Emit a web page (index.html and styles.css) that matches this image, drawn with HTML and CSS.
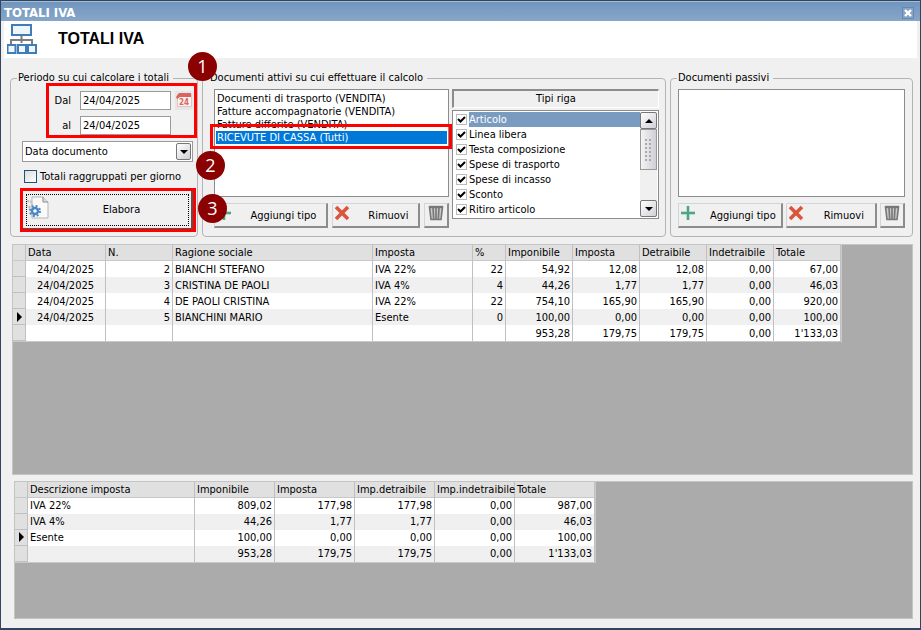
FILE: index.html
```html
<!DOCTYPE html>
<html lang="it">
<head>
    <meta charset="UTF-8">
    <meta name="viewport" content="width=device-width, initial-scale=1.0">
    <title>TOTALI IVA</title>
    <link rel="stylesheet" href="styles.css">
</head>
<body>

    <!-- shared icons -->
    <svg class="icon-defs" width="0" height="0" aria-hidden="true">
        <symbol id="icon-plus" viewBox="0 0 16 16">
            <path d="M8 1v14M1 8h14" fill="none" stroke="#8cc7ac" stroke-width="3"/>
            <path d="M8 1v14M1 8h14" fill="none" stroke="#4fa583" stroke-width="2"/>
        </symbol>
        <symbol id="icon-cross" viewBox="0 0 16 16">
            <path d="M2 2c3 3 8 8 12 12M14 2C11 5 6 10 2 14" fill="none" stroke="#d9563c" stroke-width="3.6"/>
        </symbol>
        <symbol id="icon-trash" viewBox="0 0 16 16">
            <path d="M1.5 2h13l-1.5 12.500h-10z" fill="#c9c9c9" stroke="#777" stroke-width="1.600"/>
            <path d="M1 2h14" stroke="#777" stroke-width="2.400"/>
            <path d="M5 3l.7 11M8 3v11M11 3l-.7 11" stroke="#777" stroke-width="1.600"/>
        </symbol>
    </svg>

    <div class="window">
        <div class="titlebar">
            <span>TOTALI IVA</span>
            <button class="close-btn" aria-label="Chiudi">
                <svg viewBox="0 0 8 8" width="8" height="8"><path d="M1 1l6 6M7 1L1 7" stroke="#fff" stroke-width="2.400"/></svg>
            </button>
        </div>

        <div class="header">
            <svg class="header-icon" viewBox="0 0 32 32" width="32" height="32">
                <path d="M14.500 13v7M4 21v-4h21v4" fill="none" stroke="#7d7d7d" stroke-width="2"/>
                <g fill="#eef6fc" stroke="#3f7cb8" stroke-width="2">
                    <rect x="5" y="2" width="19" height="10"/>
                    <rect x="0.500" y="22" width="8" height="8"/>
                    <rect x="11" y="22" width="8" height="8"/>
                    <rect x="21" y="22" width="8" height="8"/>
                </g>
            </svg>
            <h1>TOTALI IVA</h1>
        </div>

        <div class="content">
            <div class="groups">
                <fieldset class="group group-period">
                    <legend>Periodo su cui calcolare i totali</legend>
                    <div class="date-row">
                        <label for="dal">Dal</label>
                        <input type="text" id="dal" value="24/04/2025">
                        <button class="calendar-btn" aria-label="Calendario">
                            <svg viewBox="0 0 18 18" width="18" height="18">
                                <path d="M2.500 3.500h14v12h-14z" fill="#fbf3f2" stroke="#dcc6c4"/>
                                <path d="M1 6l3-4h12v4H5l-3 2z" fill="#d9665c"/>
                                <text x="9" y="14" text-anchor="middle" class="calendar-day">24</text>
                            </svg>
                        </button>
                    </div>
                    <div class="date-row">
                        <label for="al">al</label>
                        <input type="text" id="al" value="24/04/2025">
                    </div>
                    <div class="combo">
                        <select aria-label="Tipo data">
                            <option>Data documento</option>
                        </select>
                        <span class="combo-arrow"></span>
                    </div>
                    <label class="daily"><input type="checkbox">Totali raggruppati per giorno</label>
                    <button class="run-btn">
                        <svg viewBox="0 0 24 24" width="24" height="24">
                            <path d="M6 1h11l5 5v16H6z" fill="#fafafa" stroke="#b5b5b5"/>
                            <path d="M17 1v5h5" fill="#ddd" stroke="#8d8d8d"/>
                            <circle cx="3" cy="8" r="3" fill="none" stroke="#bdbdbd" stroke-width="2" stroke-dasharray="2 1"/>
                            <circle cx="9" cy="15" r="5" fill="none" stroke="#4a86c0" stroke-width="2" stroke-dasharray="2 1.930"/>
                            <circle cx="9" cy="15" r="3" fill="#fff" stroke="#4a86c0" stroke-width="2.400"/>
                        </svg>
                        <span>Elabora</span>
                    </button>
                    <span class="mark mark-dates"></span>
                    <span class="mark mark-run"></span>
                </fieldset>

                <fieldset class="group group-active">
                    <legend>Documenti attivi su cui effettuare il calcolo</legend>
                    <div class="doc-column">
                        <ul class="listbox" role="listbox" aria-label="Documenti attivi">
                            <li role="option">Documenti di trasporto (VENDITA)</li>
                            <li role="option">Fatture accompagnatorie (VENDITA)</li>
                            <li role="option">Fatture differite (VENDITA)</li>
                            <li role="option" class="selected" aria-selected="true">RICEVUTE DI CASSA (Tutti)</li>
                        </ul>
                        <div class="buttons">
                            <button class="btn btn-add"><svg width="16" height="16"><use href="#icon-plus"/></svg><span>Aggiungi tipo</span></button>
                            <button class="btn btn-remove"><svg width="16" height="16"><use href="#icon-cross"/></svg><span>Rimuovi</span></button>
                            <button class="btn btn-trash" aria-label="Svuota"><svg width="16" height="16"><use href="#icon-trash"/></svg></button>
                        </div>
                    </div>
                    <div class="type-column">
                        <div class="type-title">Tipi riga</div>
                        <div class="checklist">
                            <div class="checklist-items">
                                <label class="active"><input type="checkbox" checked><span>Articolo</span></label>
                                <label><input type="checkbox" checked><span>Linea libera</span></label>
                                <label><input type="checkbox" checked><span>Testa composizione</span></label>
                                <label><input type="checkbox" checked><span>Spese di trasporto</span></label>
                                <label><input type="checkbox" checked><span>Spese di incasso</span></label>
                                <label><input type="checkbox" checked><span>Sconto</span></label>
                                <label><input type="checkbox" checked><span>Ritiro articolo</span></label>
                            </div>
                            <div class="scrollbar">
                                <button class="scroll-btn" aria-label="Su"><span class="arrow-up"></span></button>
                                <div class="scroll-thumb"><span class="grip"></span></div>
                                <button class="scroll-btn scroll-down" aria-label="Giù"><span class="arrow-down"></span></button>
                            </div>
                        </div>
                    </div>
                    <span class="mark mark-doc"></span>
                    <span class="badge badge-1">1</span>
                    <span class="badge badge-2">2</span>
                    <span class="badge badge-3">3</span>
                </fieldset>

                <fieldset class="group group-passive">
                    <legend>Documenti passivi</legend>
                    <ul class="listbox" role="listbox" aria-label="Documenti passivi"></ul>
                    <div class="buttons">
                        <button class="btn btn-add"><svg width="16" height="16"><use href="#icon-plus"/></svg><span>Aggiungi tipo</span></button>
                        <button class="btn btn-remove"><svg width="16" height="16"><use href="#icon-cross"/></svg><span>Rimuovi</span></button>
                        <button class="btn btn-trash" aria-label="Svuota"><svg width="16" height="16"><use href="#icon-trash"/></svg></button>
                    </div>
                </fieldset>
            </div>

            <div class="grid grid-documents">
                <table>
                    <colgroup>
                        <col class="w-mark"><col class="w-date"><col class="w-num"><col class="w-name"><col class="w-tax"><col class="w-pct">
                        <col class="w-num"><col class="w-num"><col class="w-num"><col class="w-num"><col class="w-num">
                    </colgroup>
                    <thead>
                        <tr><th></th><th>Data</th><th>N.</th><th>Ragione sociale</th><th>Imposta</th><th>%</th><th>Imponibile</th><th>Imposta</th><th>Detraibile</th><th>Indetraibile</th><th>Totale</th></tr>
                    </thead>
                    <tbody>
                        <tr><th></th><td class="date">24/04/2025</td><td class="num">2</td><td>BIANCHI STEFANO</td><td>IVA 22%</td><td class="num">22</td><td class="num">54,92</td><td class="num">12,08</td><td class="num">12,08</td><td class="num">0,00</td><td class="num">67,00</td></tr>
                        <tr><th></th><td class="date">24/04/2025</td><td class="num">3</td><td>CRISTINA DE PAOLI</td><td>IVA 4%</td><td class="num">4</td><td class="num">44,26</td><td class="num">1,77</td><td class="num">1,77</td><td class="num">0,00</td><td class="num">46,03</td></tr>
                        <tr><th></th><td class="date">24/04/2025</td><td class="num">4</td><td>DE PAOLI CRISTINA</td><td>IVA 22%</td><td class="num">22</td><td class="num">754,10</td><td class="num">165,90</td><td class="num">165,90</td><td class="num">0,00</td><td class="num">920,00</td></tr>
                        <tr><th><span class="arrow-right"></span></th><td class="date">24/04/2025</td><td class="num">5</td><td>BIANCHINI MARIO</td><td>Esente</td><td class="num">0</td><td class="num">100,00</td><td class="num">0,00</td><td class="num">0,00</td><td class="num">0,00</td><td class="num">100,00</td></tr>
                        <tr><th></th><td></td><td></td><td></td><td></td><td></td><td class="num">953,28</td><td class="num">179,75</td><td class="num">179,75</td><td class="num">0,00</td><td class="num">1'133,03</td></tr>
                    </tbody>
                </table>
            </div>

            <div class="grid grid-taxes">
                <table>
                    <colgroup>
                        <col class="w-mark"><col class="w-desc"><col class="w-sum"><col class="w-sum"><col class="w-sum"><col class="w-sum"><col class="w-sum">
                    </colgroup>
                    <thead>
                        <tr><th></th><th>Descrizione imposta</th><th>Imponibile</th><th>Imposta</th><th>Imp.detraibile</th><th>Imp.indetraibile</th><th>Totale</th></tr>
                    </thead>
                    <tbody>
                        <tr><th></th><td>IVA 22%</td><td class="num">809,02</td><td class="num">177,98</td><td class="num">177,98</td><td class="num">0,00</td><td class="num">987,00</td></tr>
                        <tr><th></th><td>IVA 4%</td><td class="num">44,26</td><td class="num">1,77</td><td class="num">1,77</td><td class="num">0,00</td><td class="num">46,03</td></tr>
                        <tr><th><span class="arrow-right"></span></th><td>Esente</td><td class="num">100,00</td><td class="num">0,00</td><td class="num">0,00</td><td class="num">0,00</td><td class="num">100,00</td></tr>
                        <tr><th></th><td></td><td class="num">953,28</td><td class="num">179,75</td><td class="num">179,75</td><td class="num">0,00</td><td class="num">1'133,03</td></tr>
                    </tbody>
                </table>
            </div>
        </div>
    </div>

</body>
</html>
```

FILE: styles.css
```css
* { box-sizing: border-box; }
body { margin: 0; font-family: Tahoma, "DejaVu Sans Condensed", "DejaVu Sans", sans-serif; font-size: 11px; line-height: 13px; color: #000; }
button, input, select { font: inherit; color: inherit; margin: 0; }
button { padding: 0; }
.icon-defs { position: absolute; }

.window { display: flex; flex-direction: column; min-height: 100vh; background: #f0f0f0; border: 1px solid #31465e; border-bottom-width: 2px; }

/* title bar */
.titlebar { display: flex; align-items: center; justify-content: space-between; height: 20px; padding: 2px 6px 0 3px; background: linear-gradient(#7096bf, #88a6c8); border-top: 1px solid #a5bcd6; color: #fff; font-size: 13px; line-height: 16px; font-weight: bold; }
.close-btn { display: flex; align-items: center; justify-content: center; width: 12px; height: 12px; background: #88a5c6; border: 1px solid #6588b0; }

.header { display: flex; align-items: center; gap: 19px; height: 37px; margin: 0 3px; padding: 0 0 2px 3px; background: #fff; }
.header-icon { flex: none; }
h1 { margin: 0; font-family: "Liberation Sans", Arial, sans-serif; font-size: 16px; line-height: 20px; }

.content { display: flex; flex-direction: column; flex: 1; padding: 13px 7px 9px 9px; }

/* group boxes */
.groups { display: flex; gap: 4px; }
.group { position: relative; min-width: 0; margin: 0; padding: 4px 6px 6px 11px; border: 1px solid #b4b4b4; border-radius: 4px; }
.group legend { height: 14px; margin-left: -5px; padding: 0 4px 0 1px; white-space: nowrap; }
.group-period { width: 188px; padding-right: 4px; }
.group-active { display: flex; flex: 1; gap: 3px; }
.group-passive { width: 243px; padding-left: 7px; padding-right: 7px; }
.group-passive legend { margin-left: -1px; }

.date-row { display: flex; align-items: center; gap: 4px; height: 19px; margin: 2px 0 6px; }
.date-row label { width: 54px; padding-right: 5px; text-align: right; }
.date-row input { width: 91px; height: 19px; padding: 2px; background: #fff; border: 1px solid #9a9a9a; }
.calendar-btn { width: 18px; height: 19px; background: #e6e6e6; border: 0; }
.calendar-day { font-size: 8px; font-weight: bold; fill: #d9665c; }

.combo { position: relative; height: 21px; margin-bottom: 8px; }
.combo select { display: block; width: 100%; height: 21px; padding: 0 2px; background: #fff; border: 1px solid #9a9a9a; border-radius: 0; appearance: none; }
.combo-arrow { position: absolute; top: 2px; right: 2px; width: 15px; height: 17px; background: linear-gradient(135deg, #fff, #cfcfd6); border: 1px solid #777; border-radius: 2px; pointer-events: none; }
.combo-arrow::after { content: ""; position: absolute; top: 6px; left: 3px; border: 4px solid transparent; border-top-color: #000; border-bottom: 0; }

.daily { display: flex; align-items: center; gap: 3px; height: 13px; margin: 0 0 7px 2px; white-space: nowrap; }
.daily input { width: 13px; height: 13px; background: linear-gradient(135deg, #dcdcd8, #fff); border: 1px solid #1c5180; appearance: none; }

.run-btn { display: flex; align-items: center; width: 100%; height: 40px; padding: 2px; background: #f0f0f0; border: 1px solid #fff; border-right: 2px solid #555; border-bottom: 2px solid #555; outline: 1px dotted #000; outline-offset: -5px; }
.run-btn svg { margin: -4px 0 0 1px; }
.run-btn span { flex: 1; padding-left: 4px; text-align: center; }

/* lists and their buttons */
.listbox { height: 108px; margin: 0 0 6px; padding: 2px 1px; list-style: none; background: #fff; border: 1px solid #8c8c8c; }
.listbox li { height: 13px; padding-left: 1px; white-space: nowrap; }
.listbox .selected { background: #0078d7; color: #fff; }
.doc-column { flex: 1; min-width: 0; }
.buttons { display: flex; gap: 4px; }
.btn { display: flex; align-items: center; height: 25px; padding: 0 1px; background: #f0f0f0; border: 1px solid #d4d4dc; border-right: 2px solid #8c8c8c; border-bottom: 2px solid #8c8c8c; }
.btn svg { flex: none; margin-top: -4px; }
.btn span { flex: 1; padding-left: 10px; text-align: center; white-space: nowrap; }
.btn-add { flex: 115 1 0; }
.btn-remove { flex: 88 1 0; }
.btn-trash { width: 25px; justify-content: center; }
.group-passive .buttons { gap: 3px; }
.group-passive .btn-add { flex: 105 1 0; }
.group-passive .btn-remove { flex: 91 1 0; }

.type-column { width: 207px; }
.type-title { height: 19px; margin-bottom: 2px; border: 1px solid #fff; border-top: 2px solid #8c8c8c; border-left: 2px solid #8c8c8c; line-height: 16px; text-align: center; }
.checklist { display: flex; height: 109px; padding: 1px; background: #fff; border: 1px solid #8c8c8c; }
.checklist-items { flex: 1; }
.checklist label { display: flex; align-items: center; height: 15px; padding-left: 2px; }
.checklist label span { flex: 1; height: 15px; margin-left: 2px; line-height: 15px; }
.checklist .active span { background: #7a9bc0; color: #fff; }
.checklist input { width: 11px; height: 11px; background: #fff; border: 1px solid #bbb; appearance: none; }
.checklist input:checked { background: url('data:image/svg+xml,<svg xmlns="http://www.w3.org/2000/svg" viewBox="0 0 9 9"><path d="M1 4l2.500 2.500L8 2" fill="none" stroke="black" stroke-width="2"/></svg>'); }

.scrollbar { display: flex; flex-direction: column; width: 17px; background: #f0f0f0; }
.scroll-btn { display: flex; align-items: center; justify-content: center; height: 17px; background: linear-gradient(135deg, #fff, #cfcfd6); border: 1px solid #777; border-radius: 2px; }
.scroll-down { margin-top: auto; }
.scroll-thumb { display: flex; align-items: center; justify-content: center; height: 41px; background: linear-gradient(90deg, #f4f4f4, #cfcfd6); border: 1px solid #999; }
.grip { width: 8px; height: 22px; background: radial-gradient(circle at 1px 1px, #aaa 1px, transparent 1px) 0 0 / 4px 4px; }
.arrow-up { border: 4px solid transparent; border-bottom-color: #000; border-top: 0; }
.arrow-down { border: 4px solid transparent; border-top-color: #000; border-bottom: 0; }

/* data grids */
.grid { background: #ababab; border: 1px solid #c4c4c4; }
.grid-documents { flex: 231 1 0px; margin: 7px 0 0 2px; }
.grid-taxes { flex: 138 1 0px; margin: 6px 0 0 4px; }
.grid table { width: min-content; table-layout: fixed; border-collapse: separate; border-spacing: 0; border-right: 1px solid #c9c9c9; border-bottom: 1px solid #c9c9c9; }
.grid th, .grid td { height: 16px; padding: 0 2px; border-right: 1px solid #c0c0c4; white-space: nowrap; font-weight: normal; text-align: left; line-height: 15px; }
.grid th { background: #e0e0e0; }
.grid thead th { border-bottom: 1px solid #c8c8cc; }
.grid tbody th { padding: 0 0 0 4px; border-bottom: 1px solid #c0c0c4; }
.grid tbody tr { background: #fff; }
.grid tbody tr:nth-child(even) { background: #f0f0f0; }
.grid .num { text-align: right; }
.grid .date { text-align: center; }
.arrow-right { display: block; width: 0; border: 5px solid transparent; border-left-color: #000; border-right: 0; }
.w-mark { width: 13px; }
.w-date, .w-sum { width: 80px; }
.w-num { width: 67px; }
.w-name { width: 200px; }
.w-tax { width: 100px; }
.w-pct { width: 33px; }
.w-desc { width: 167px; }

/* numbered steps drawn over the form */
.mark { position: absolute; border: 3px solid #f00; pointer-events: none; }
.mark-dates { top: -2px; left: 35px; width: 151px; height: 55px; }
.mark-run { bottom: 4px; left: 9px; width: 176px; height: 44px; }
.mark-doc { top: 39px; left: 7px; width: 242px; height: 25px; }
.badge { position: absolute; width: 29px; height: 29px; border-radius: 50%; background: #8b0000; color: #fff; font-family: "Open Sans", sans-serif; font-size: 18px; line-height: 29px; text-align: center; }
.badge-1 { top: -33px; left: -15px; }
.badge-2 { top: 66px; left: -7px; }
.badge-3 { top: 109px; left: -5px; }
```
